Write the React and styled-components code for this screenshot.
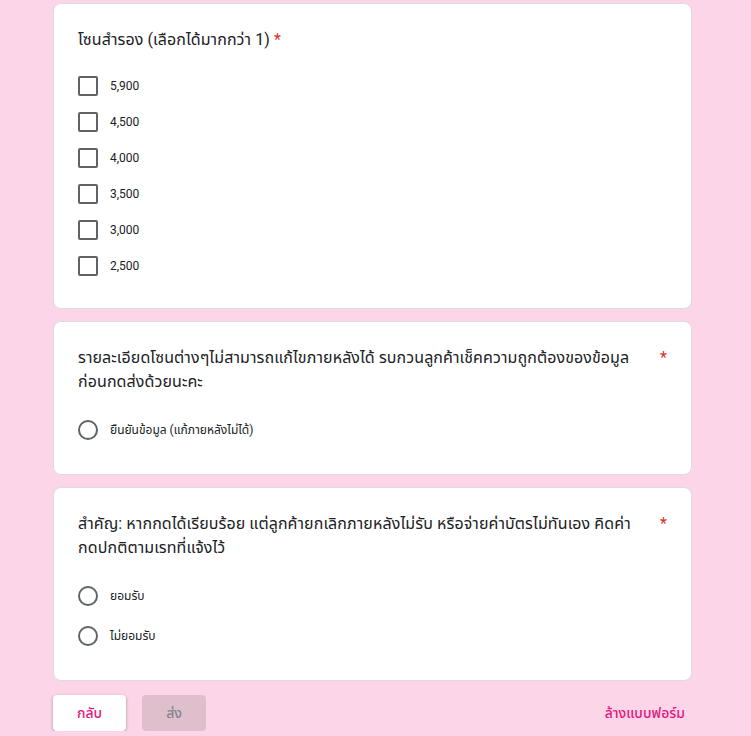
import React from 'react';
import styled, { createGlobalStyle } from 'styled-components';

const GlobalStyle = createGlobalStyle`
  html, body {
    margin: 0;
    padding: 0;
    background: #fdd5e8;
  }
  body {
    font-family: Roboto, "Noto Sans Thai", "Noto Sans", Arial, sans-serif;
    color: #202124;
  }
`;

const Page = styled.div`
  width: 639px;
  margin: 0 auto;
  padding: 3px 6px 0 0;
  display: flex;
  flex-direction: column;
  gap: 12px;
`;

const Card = styled.div`
  background: #fff;
  border: 1px solid #dadce0;
  border-radius: 8px;
  padding: 24px;
`;

const Title = styled.div`
  display: flex;
  align-items: flex-start;
  font-size: 16px;
  line-height: 24px;
  letter-spacing: 0.1px;
  color: #202124;
  margin-bottom: 16px;
`;

const TitleText = styled.span`
  flex: 0 1 auto;
  padding-right: ${({ $wide }) => ($wide ? '14px' : '0')};
`;

const Star = styled.span`
  color: #d93025;
  padding-left: 4px;
`;

const Option = styled.label`
  display: flex;
  align-items: center;
  height: ${({ $h }) => $h}px;
  font-size: 12px;
  color: #202124;
`;

const Box = styled.span`
  box-sizing: border-box;
  width: 20px;
  height: 20px;
  border: 2px solid #5f6368;
  border-radius: ${({ $round }) => ($round ? '50%' : '2px')};
  margin-right: 12px;
  flex-shrink: 0;
`;

const Footer = styled.div`
  display: flex;
  align-items: center;
  margin-top: 2px;
  gap: 16px;
`;

const Button = styled.button`
  font-family: inherit;
  font-size: 14px;
  font-weight: 500;
  height: 36px;
  padding: 0 ${({ $pad }) => $pad}px;
  border-radius: 4px;
  border: none;
  cursor: pointer;
  background: ${({ $disabled }) => ($disabled ? '#e0bfcd' : '#fff')};
  color: ${({ $disabled }) => ($disabled ? '#80868b' : '#e3157e')};
  box-shadow: ${({ $disabled }) =>
    $disabled
      ? 'none'
      : '0 1px 2px 0 rgba(60,64,67,.3), 0 1px 3px 1px rgba(60,64,67,.15)'};
`;

const Clear = styled.span`
  margin-left: auto;
  margin-right: 7px;
  font-size: 14px;
  font-weight: 500;
  color: #e3157e;
`;

const zones = ['5,900', '4,500', '4,000', '3,500', '3,000', '2,500'];

export default function App() {
  return (
    <>
      <GlobalStyle />
      <Page>
        <Card>
          <Title>
            <TitleText>โซนสำรอง (เลือกได้มากกว่า 1)</TitleText>
            <Star>*</Star>
          </Title>
          {zones.map((z) => (
            <Option key={z} $h={36}>
              <Box />
              {z}
            </Option>
          ))}
        </Card>

        <Card>
          <Title>
            <TitleText $wide>
              รายละเอียดโซนต่างๆไม่สามารถแก้ไขภายหลังได้ รบกวนลูกค้าเช็คความถูกต้องของข้อมูล ก่อนกดส่งด้วยนะคะ
            </TitleText>
            <Star>*</Star>
          </Title>
          <Option $h={40}>
            <Box $round />
            ยืนยันข้อมูล (แก้ภายหลังไม่ได้)
          </Option>
        </Card>

        <Card>
          <Title>
            <TitleText $wide>
              สำคัญ: หากกดได้เรียบร้อย แต่ลูกค้ายกเลิกภายหลังไม่รับ หรือจ่ายค่าบัตรไม่ทันเอง คิดค่ากดปกติตามเรทที่แจ้งไว้
            </TitleText>
            <Star>*</Star>
          </Title>
          <Option $h={40}>
            <Box $round />
            ยอมรับ
          </Option>
          <Option $h={40}>
            <Box $round />
            ไม่ยอมรับ
          </Option>
        </Card>

        <Footer>
          <Button $pad={24}>กลับ</Button>
          <Button $pad={24} $disabled>ส่ง</Button>
          <Clear>ล้างแบบฟอร์ม</Clear>
        </Footer>
      </Page>
    </>
  );
}
